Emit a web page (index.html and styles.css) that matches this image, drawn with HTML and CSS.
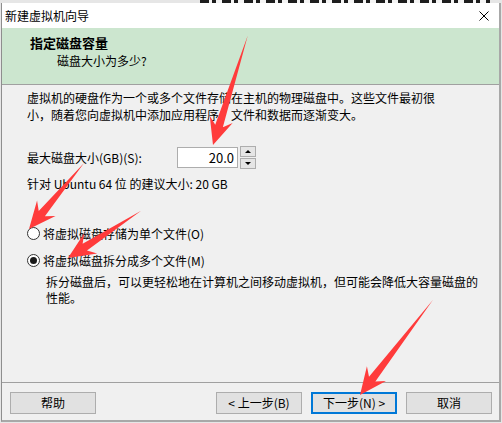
FILE: index.html
```html
<!DOCTYPE html>
<html lang="zh-CN">
<head>
    <meta charset="UTF-8">
    <title>新建虚拟机向导</title>
    <link rel="stylesheet" href="styles.css">
</head>
<body>
    <div class="behind"></div>

    <div class="window">
        <div class="titlebar">
            <span>新建虚拟机向导</span>
            <svg class="close" width="10" height="10" viewBox="0 0 10 10">
                <path d="M0.5 0.5 L9.5 9.5 M9.5 0.5 L0.5 9.5" stroke="#000" stroke-width="1"/>
            </svg>
        </div>

        <div class="header">
            <div class="header-title">指定磁盘容量</div>
            <div class="header-sub">磁盘大小为多少?</div>
        </div>

        <div class="content">
            <p class="intro">虚拟机的硬盘作为一个或多个文件存储在主机的物理磁盘中。这些文件最初很<br>小，随着您向虚拟机中添加应用程序、文件和数据而逐渐变大。</p>

            <div class="size-row">
                <label for="size">最大磁盘大小(GB)(S):</label>
                <div class="spin">
                    <input type="text" id="size" value="20.0">
                    <div class="spin-btns">
                        <span class="spin-btn"><i class="tri-up"></i></span>
                        <span class="spin-btn"><i class="tri-down"></i></span>
                    </div>
                </div>
            </div>

            <div class="hint">针对 Ubuntu 64 位 的建议大小: 20 GB</div>

            <div class="radio first"><span class="dot"></span>将虚拟磁盘存储为单个文件(O)</div>
            <div class="radio"><span class="dot checked"></span>将虚拟磁盘拆分成多个文件(M)</div>
            <p class="desc">拆分磁盘后，可以更轻松地在计算机之间移动虚拟机，但可能会降低大容量磁盘的<br>性能。</p>
        </div>

        <div class="footer">
            <button class="btn">帮助</button>
            <div class="nav">
                <button class="btn">&lt; 上一步(B)</button>
                <button class="btn primary">下一步(N) &gt;</button>
                <button class="btn">取消</button>
            </div>
        </div>
    </div>

    <!-- red annotation arrows on top of the dialog -->
    <svg class="marks" width="502" height="423" viewBox="0 0 502 423">
        <g fill="#ff3b3b">
            <polygon transform="translate(213 145) rotate(107.6)" points="-115,0 -20,-4 -27,-12 0,0 -27,12 -20,4"/>
            <polygon transform="translate(29 229) rotate(129.8)" points="-86,0 -20,-4 -27,-12 0,0 -27,12 -20,4"/>
            <polygon transform="translate(68 258) rotate(147.2)" points="-87,0 -20,-4 -27,-12 0,0 -27,12 -20,4"/>
            <polygon transform="translate(360 395) rotate(127.5)" points="-120,0 -20,-4 -27,-12 0,0 -27,12 -20,4"/>
        </g>
    </svg>
</body>
</html>
```

FILE: styles.css
```css
body {
    margin: 0;
    width: 502px;
    height: 423px;
    background: #e6e6e6;
    font-family: "Noto Sans CJK SC", "Noto Sans", sans-serif;
    font-size: 12px;
    color: #000;
    position: relative;
    overflow: hidden;
}

.behind {
    height: 3px;
    margin-left: 200px;
    width: 290px;
    background: repeating-linear-gradient(90deg, #1e1e1e 0 9px, #f4f4f4 9px 12px, #1e1e1e 12px 16px, #f4f4f4 16px 22px);
}

.window {
    margin-left: 1px;
    width: 500px;
    height: 419px;
    box-sizing: border-box;
    border-left: 1px solid #8e8e8e;
    border-right: 2px solid #a8a8a8;
    border-bottom: 2px solid #a8a8a8;
    background: #f0f0f0;
    display: flex;
    flex-direction: column;
}

.titlebar {
    height: 25px;
    background: #fff;
    display: flex;
    align-items: center;
    justify-content: space-between;
    padding: 0 10px 0 3px;
    line-height: 16px;
}

.close {
    display: block;
}

.header {
    height: 56px;
    background: #cce6cf;
    border-bottom: 1px solid #a0a0a0;
    padding-top: 7px;
    box-sizing: content-box;
    height: 49px;
    line-height: 16px;
}

.header-title {
    padding-left: 28px;
    font-size: 13px;
    font-weight: bold;
}

.header-sub {
    margin-top: 2px;
    padding-left: 55px;
}

.content {
    flex: 1;
    padding: 4px 0 0 25px;
}

.intro {
    margin: 0;
    line-height: 17px;
}

.size-row {
    display: flex;
    align-items: center;
    margin-top: 24px;
    height: 21px;
}

.size-row label {
    width: 150px;
}

.spin {
    display: flex;
    align-items: center;
}

.spin input {
    width: 61px;
    height: 21px;
    box-sizing: border-box;
    border: 1px solid #adadad;
    background: #fff;
    font-family: inherit;
    font-size: 13px;
    text-align: right;
    padding: 0 3px 0 0;
    color: #000;
}

.spin-btns {
    margin-left: 2px;
    display: flex;
    flex-direction: column;
    gap: 1px;
}

.spin-btn {
    width: 14px;
    height: 9px;
    border: 1px solid #adadad;
    background: #e5e5e5;
    display: flex;
    align-items: center;
    justify-content: center;
    box-sizing: content-box;
}

.tri-up, .tri-down {
    width: 0;
    height: 0;
    border-left: 3px solid transparent;
    border-right: 3px solid transparent;
}

.tri-up {
    border-bottom: 3px solid #000;
}

.tri-down {
    border-top: 3px solid #000;
}

.hint {
    margin-top: 8px;
    line-height: 16px;
}

.radio {
    display: flex;
    align-items: center;
    height: 16px;
    margin-top: 11px;
}

.radio.first {
    margin-top: 33px;
}

.dot {
    width: 13px;
    height: 13px;
    box-sizing: border-box;
    border: 1px solid #333;
    border-radius: 50%;
    background: #fff;
    margin-right: 3px;
    display: flex;
    align-items: center;
    justify-content: center;
}

.dot.checked::after {
    content: "";
    width: 7px;
    height: 7px;
    border-radius: 50%;
    background: #1a1a1a;
}

.desc {
    margin: 6px 0 0 19px;
    line-height: 16px;
}

.footer {
    border-top: 1px solid #a0a0a0;
    padding: 9px 7px 6px 8px;
    display: flex;
    justify-content: space-between;
}

.nav {
    display: flex;
    gap: 9px;
}

.btn {
    width: 86px;
    height: 22px;
    border: 1px solid #adadad;
    background: #e1e1e1;
    font-family: inherit;
    font-size: 12px;
    color: #000;
    padding: 0;
    line-height: 16px;
}

.btn.primary {
    border: 2px solid #0078d7;
}

.marks {
    position: absolute;
    left: 0;
    top: 0;
    pointer-events: none;
}
```
